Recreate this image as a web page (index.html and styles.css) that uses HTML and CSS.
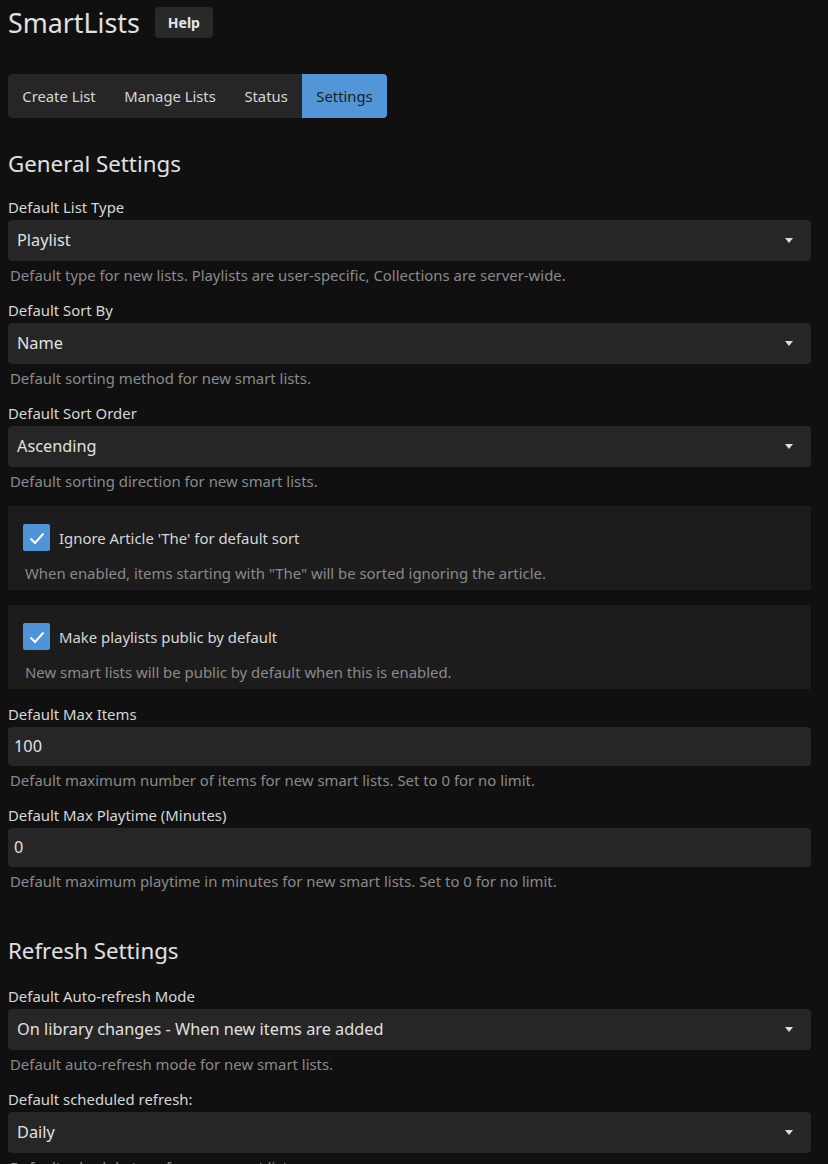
FILE: index.html
```html
<!DOCTYPE html>
<html lang="en">
<head>
    <meta charset="UTF-8">
    <title>SmartLists - Settings</title>
    <link rel="stylesheet" href="styles.css">
</head>
<body>
    <div class="page">
        <div class="header">
            <h1>SmartLists</h1>
            <button type="button" class="help-btn">Help</button>
        </div>
        <div class="tabs">
            <span class="tab">Create List</span>
            <span class="tab">Manage Lists</span>
            <span class="tab">Status</span>
            <span class="tab active">Settings</span>
        </div>

        <h2>General Settings</h2>
        <div class="field">
            <label>Default List Type</label>
            <div class="select">Playlist<span class="arrow"></span></div>
            <div class="hint">Default type for new lists. Playlists are user-specific, Collections are server-wide.</div>
        </div>
        <div class="field">
            <label>Default Sort By</label>
            <div class="select">Name<span class="arrow"></span></div>
            <div class="hint">Default sorting method for new smart lists.</div>
        </div>
        <div class="field">
            <label>Default Sort Order</label>
            <div class="select">Ascending<span class="arrow"></span></div>
            <div class="hint">Default sorting direction for new smart lists.</div>
        </div>
        <div class="check-panel">
            <div class="check-row">
                <span class="checkbox"><svg width="20" height="20" viewBox="0 0 20 20"><path d="M3.5 10.5 L8 15 L16.5 5.5" fill="none" stroke="#fff" stroke-width="2"/></svg></span>
                <span>Ignore Article 'The' for default sort</span>
            </div>
            <div class="check-hint">When enabled, items starting with "The" will be sorted ignoring the article.</div>
        </div>
        <div class="check-panel">
            <div class="check-row">
                <span class="checkbox"><svg width="20" height="20" viewBox="0 0 20 20"><path d="M3.5 10.5 L8 15 L16.5 5.5" fill="none" stroke="#fff" stroke-width="2"/></svg></span>
                <span>Make playlists public by default</span>
            </div>
            <div class="check-hint">New smart lists will be public by default when this is enabled.</div>
        </div>
        <div class="field">
            <label>Default Max Items</label>
            <div class="input">100</div>
            <div class="hint">Default maximum number of items for new smart lists. Set to 0 for no limit.</div>
        </div>
        <div class="field">
            <label>Default Max Playtime (Minutes)</label>
            <div class="input">0</div>
            <div class="hint">Default maximum playtime in minutes for new smart lists. Set to 0 for no limit.</div>
        </div>

        <h2 class="section">Refresh Settings</h2>
        <div class="field">
            <label>Default Auto-refresh Mode</label>
            <div class="select">On library changes - When new items are added<span class="arrow"></span></div>
            <div class="hint">Default auto-refresh mode for new smart lists.</div>
        </div>
        <div class="field">
            <label>Default scheduled refresh:</label>
            <div class="select">Daily<span class="arrow"></span></div>
            <div class="hint">Default schedule type for new smart lists.</div>
        </div>
    </div>
</body>
</html>
```

FILE: styles.css
```css
body {
    margin: 0;
    background: #101010;
    color: #d6d6d6;
    font-family: 'Noto Sans', sans-serif;
}
.page {
    width: 803px;
    margin-left: 8px;
}
.header {
    display: flex;
    align-items: center;
    gap: 15px;
    height: 45px;
}
h1 {
    margin: 0;
    font-size: 26.8px;
    font-weight: 400;
    color: #e0e0e0;
}
.help-btn {
    background: #292929;
    color: #e6e6e6;
    border: none;
    border-radius: 4px;
    font-family: 'Noto Sans', sans-serif;
    font-weight: bold;
    font-size: 14px;
    height: 31px;
    padding: 0 13px;
}
.tabs {
    display: inline-flex;
    margin-top: 29px;
    background: #262626;
    border-radius: 4px;
    overflow: hidden;
}
.tab {
    padding: 0 14.3px;
    line-height: 44px;
    font-size: 14.8px;
    color: #d6d6d6;
}
.tab.active {
    background: #5296d8;
    color: #1e1e1e;
}
h2 {
    margin: 30px 0 18px 0;
    font-size: 22.3px;
    font-weight: 400;
    color: #e0e0e0;
}
h2.section {
    margin: 44px 0 20px 0;
}
.field {
    margin-bottom: 15px;
}
label {
    display: block;
    font-size: 14.9px;
    line-height: 20px;
    margin-bottom: 3px;
}
.select, .input {
    background: #262626;
    border-radius: 4px;
    font-size: 16.3px;
    color: #e0e0e0;
    position: relative;
}
.select {
    height: 41px;
    line-height: 41px;
    padding-left: 9px;
}
.input {
    height: 39px;
    line-height: 39px;
    padding-left: 6px;
}
.arrow {
    position: absolute;
    right: 18px;
    top: 18px;
    border-left: 4.5px solid transparent;
    border-right: 4.5px solid transparent;
    border-top: 5px solid #dddddd;
}
.hint {
    margin: 4px 0 0 2px;
    font-size: 14.9px;
    line-height: 20px;
    color: #8a8a8a;
}
.check-panel {
    background: #1c1c1c;
    padding: 18px 15px 7px 15px;
    margin: 8px 0 15px 0;
}
.check-row {
    display: flex;
    align-items: center;
    gap: 9px;
    font-size: 14.9px;
}
.checkbox {
    width: 27px;
    height: 27px;
    background: #4f94d8;
    border-radius: 2px;
    display: flex;
    align-items: center;
    justify-content: center;
}
.check-hint {
    margin: 12px 0 0 2px;
    font-size: 14.9px;
    line-height: 20px;
    color: #8a8a8a;
}
```
